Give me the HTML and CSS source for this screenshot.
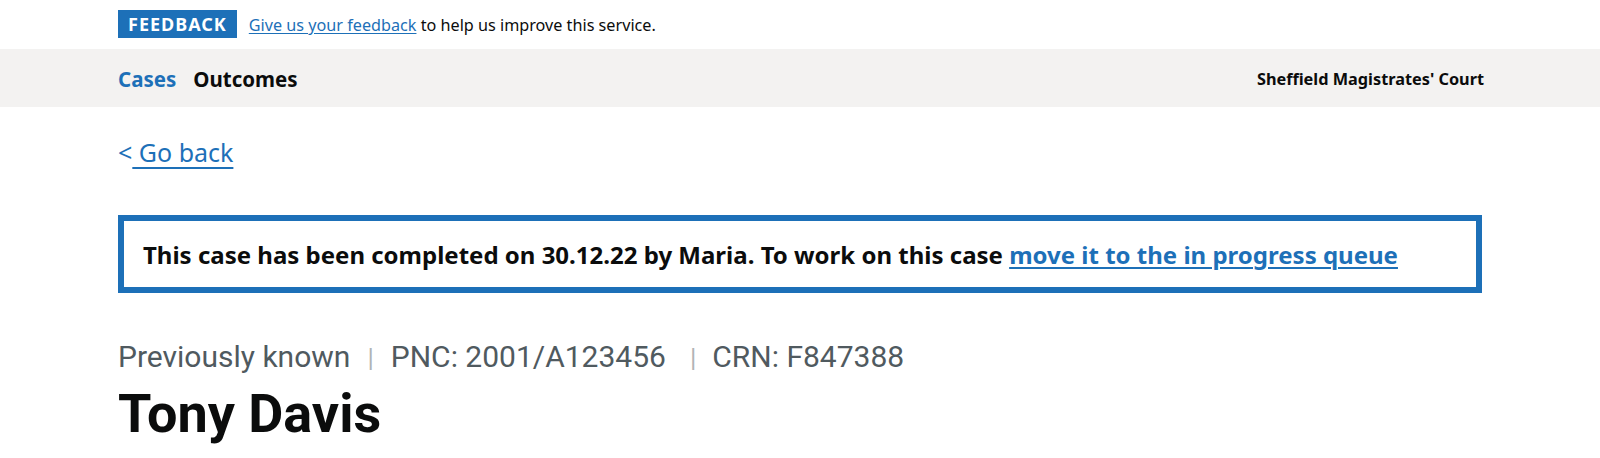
FILE: index.html
```html
<!DOCTYPE html>
<html lang="en">
<head>
<meta charset="utf-8">
<title>Tony Davis</title>
<link rel="stylesheet" href="styles.css">
</head>
<body>
<div class="phase">
  <div class="container phase-inner">
    <strong class="tag">FEEDBACK</strong>
    <span class="phase-text"><a href="#" class="phase-link">Give us your feedback</a> to help us improve this service.</span>
  </div>
</div>
<div class="nav">
  <div class="container nav-inner">
    <ul class="nav-list">
      <li><a href="#" class="nav-link active">Cases</a></li>
      <li><a href="#" class="nav-link">Outcomes</a></li>
    </ul>
    <span class="court">Sheffield Magistrates' Court</span>
  </div>
</div>
<main class="container main">
  <div class="back"><span class="back-arrow">&lt;</span><a href="#" class="back-link">&nbsp;Go back</a></div>
  <div class="banner">
    <p class="banner-text">This case has been completed on 30.12.22 by Maria. To work on this case <a href="#" class="banner-link">move it to the in progress queue</a></p>
  </div>
  <p class="meta"><span>Previously known</span><span class="sep">|</span><span>PNC: 2001/A123456</span><span class="sep sep-wide">|</span><span>CRN: F847388</span></p>
  <h1 class="name">Tony Davis</h1>
</main>
</body>
</html>
```
FILE: styles.css
```css
* { box-sizing: border-box; }
html, body { margin: 0; padding: 0; background: #fff; }
body {
  font-family: "Noto Sans", "Liberation Sans", Arial, sans-serif;
  color: #0b0c0c;
}
.container {
  width: 1364px;
  margin: 0 auto;
}
.phase { height: 49px; }
.phase-inner {
  display: flex;
  align-items: center;
  height: 49px;
}
.tag {
  display: inline-block;
  background: #1d70b8;
  color: #fff;
  font-size: 18px;
  font-weight: 700;
  letter-spacing: 1px;
  line-height: 28px;
  height: 28px;
  padding: 0 10px;
  margin-top: -1px;
}
.phase-text {
  margin-left: 12px;
  font-size: 16.2px;
  color: #0b0c0c;
}
.phase-link { color: #1d70b8; text-decoration: underline; text-underline-offset: 2px; }
.nav {
  background: #f3f2f1;
  height: 58px;
}
.nav-inner {
  display: flex;
  align-items: center;
  justify-content: space-between;
  height: 58px;
  padding-top: 2px;
}
.nav-list {
  display: flex;
  gap: 17px;
  list-style: none;
  margin: 0;
  padding: 0;
}
.nav-link {
  font-size: 20.5px;
  font-weight: 700;
  color: #0b0c0c;
  text-decoration: none;
}
.nav-link.active { color: #1d70b8; }
.court {
  font-size: 16.3px;
  font-weight: 700;
  margin-right: -2px;
}
.main { padding-top: 28px; }
.back {
  font-size: 25px;
  line-height: 34px;
  color: #1d70b8;
}
.back-link {
  color: #1d70b8;
  text-decoration: underline;
  text-decoration-thickness: 2px;
  text-underline-offset: 5px;
}
.banner {
  margin-top: 46px;
  border: 6px solid #1d70b8;
  height: 78px;
  display: flex;
  align-items: center;
  padding: 0 19px;
}
.banner-text {
  margin: 0;
  font-size: 24px;
  font-weight: 700;
}
.banner-link {
  color: #1d70b8;
  text-decoration: underline;
  text-decoration-thickness: 2px;
  text-underline-offset: 3px;
}
.meta {
  margin: 47px 0 0;
  font-family: Roboto, "Noto Sans", sans-serif;
  font-size: 30px;
  line-height: 34px;
  color: #505a5f;
}
.sep { color: #b1b4b6; margin: 0 17px; font-size: 26px; }
.sep-wide { margin-left: 24px; margin-right: 16px; }
.name {
  margin: 9px 0 0;
  font-family: Roboto, "Noto Sans", sans-serif;
  font-size: 54px;
  font-weight: 700;
  line-height: 60px;
  color: #0b0c0c;
}
```
